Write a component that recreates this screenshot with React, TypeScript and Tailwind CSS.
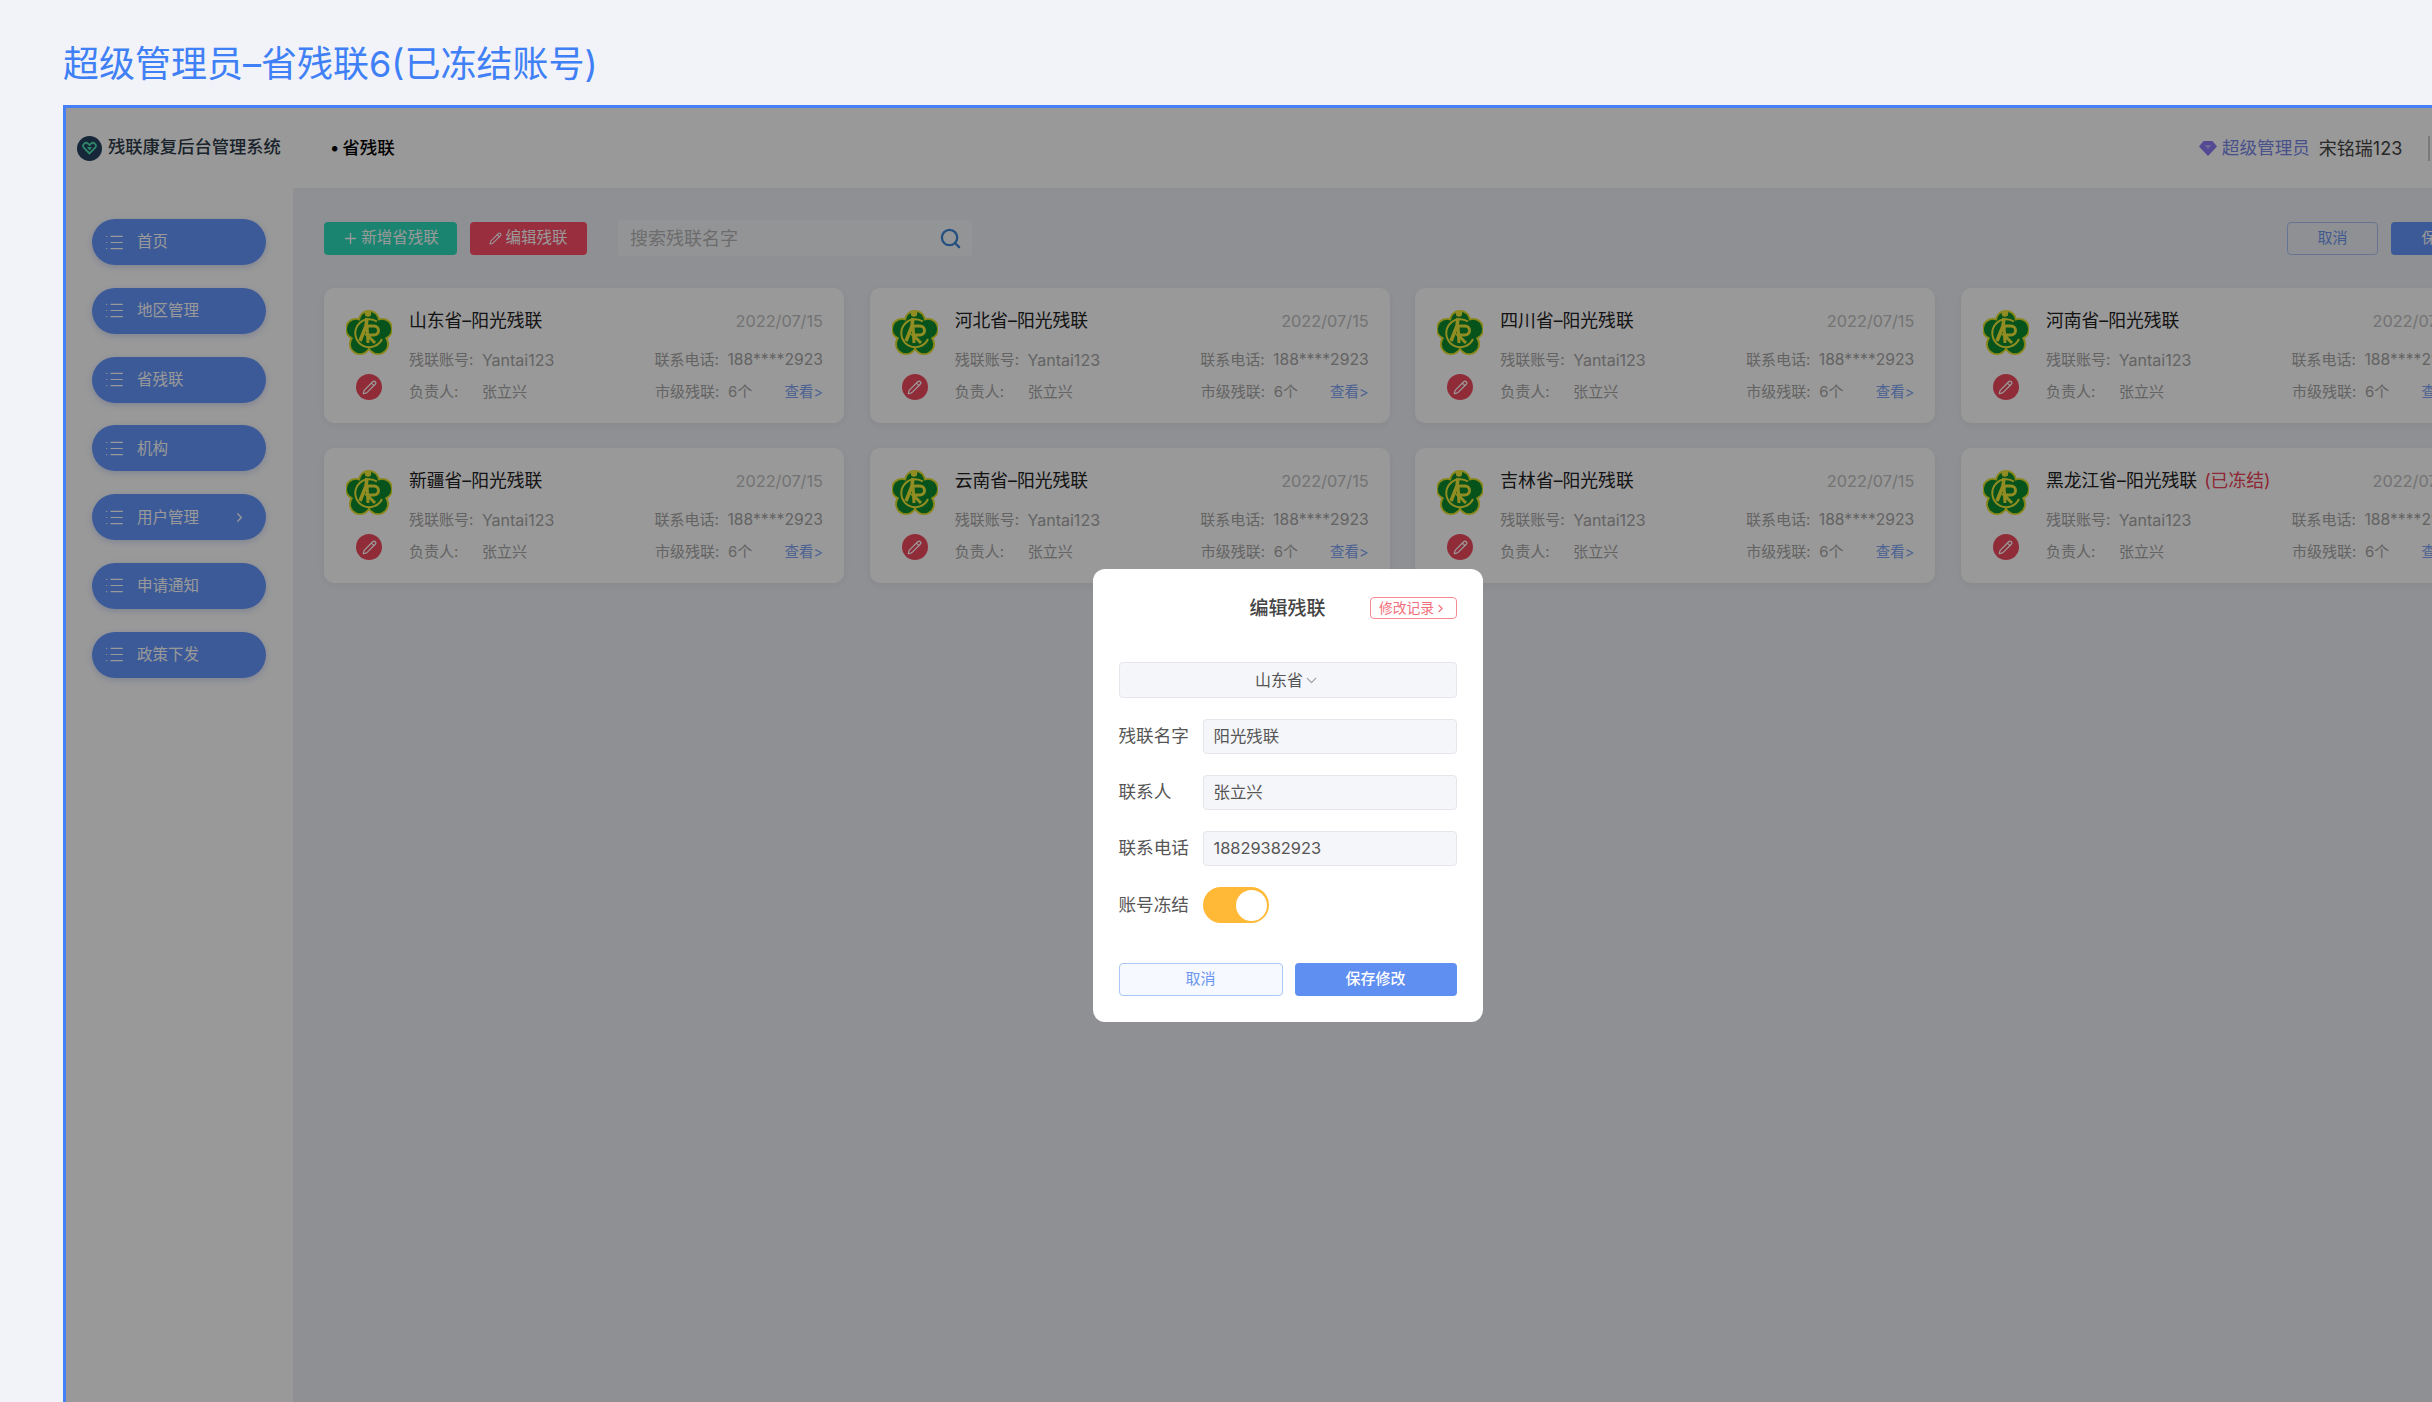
import React from "react";
import { ChevronDown, ChevronRight, List, Pencil, Plus, Search } from "lucide-react";

const navItems = ["首页", "地区管理", "省残联", "机构", "用户管理", "申请通知", "政策下发"];

const cards = [
  { name: "山东省–阳光残联" },
  { name: "河北省–阳光残联" },
  { name: "四川省–阳光残联" },
  { name: "河南省–阳光残联" },
  { name: "新疆省–阳光残联" },
  { name: "云南省–阳光残联" },
  { name: "吉林省–阳光残联" },
  { name: "黑龙江省–阳光残联", frozen: true },
];

function Emblem() {
  const petals = [
    [23, 13],
    [36, 21],
    [32, 36],
    [14, 36],
    [10, 21],
  ];
  return (
    <svg width="46" height="48" viewBox="0 0 46 48" fill="none">
      {petals.map(([x, y]) => (
        <circle key={`o${x}${y}`} cx={x} cy={y} r="11" fill="#e6e22c" />
      ))}
      <circle cx="23" cy="25" r="15" fill="#e6e22c" />
      {petals.map(([x, y]) => (
        <circle key={`i${x}${y}`} cx={x} cy={y} r="9.2" fill="#0a8a2e" />
      ))}
      <circle cx="23" cy="25" r="14" fill="#0a8a2e" />
      <circle cx="22" cy="5.5" r="3.2" fill="#f2ec3a" />
      <path d="M31 13.5A14 14 0 1 0 36 31" stroke="#f2ec3a" strokeWidth="2" />
      <path d="M21 10L20 18L14 33" stroke="#f2ec3a" strokeWidth="3.6" />
      <path d="M21 18H28A4.5 4.5 0 0 1 28 27H21L29 35" stroke="#f2ec3a" strokeWidth="3" />
      <path d="M21 17L22 35" stroke="#f2ec3a" strokeWidth="3" />
    </svg>
  );
}

function HeartLogo() {
  return (
    <span className="flex h-[25px] w-[25px] items-center justify-center rounded-full bg-[#24425f]">
      <svg width="15" height="14" viewBox="0 0 15 14" fill="none">
        <path
          d="M7.5 12.5L1.6 6.4C-.2 3.6 3.6.4 6 2.6L7.5 4 9 2.6C11.4.4 15.2 3.6 13.4 6.4Z"
          stroke="#4fe0b0"
          strokeWidth="1.8"
        />
        <path d="M5 6H10L7.5 9.5Z" fill="#4fe0b0" />
      </svg>
    </span>
  );
}

function Card({ name, frozen }: { name: string; frozen?: boolean }) {
  return (
    <div className="flex h-[135px] rounded-[10px] bg-white pl-[22px] pr-[21px] pt-[20px] shadow-[0_2px_8px_rgba(120,130,160,0.12)]">
      <div className="flex w-[63px] shrink-0 flex-col items-start">
        <Emblem />
        <span className="ml-[10px] mt-[18px] flex h-[26px] w-[26px] items-center justify-center rounded-full bg-[#f04a5e]">
          <Pencil size={15} className="text-white" strokeWidth={2} />
        </span>
      </div>
      <div className="min-w-0 flex-1 text-[15px] leading-[22px] text-[#a6a6a6]">
        <div className="flex h-[26px] items-center justify-between">
          <span className="text-[17.8px] text-[#222]">
            {name}
            {frozen && <span className="ml-[7px] text-[#ef4056]">(已冻结)</span>}
          </span>
          <span className="text-[16.3px] text-[#c0c0c0]">2022/07/15</span>
        </div>
        <div className="mt-[15px] flex items-center">
          <span className="w-[73px]">残联账号:</span>
          <span className="w-[173px] text-[16px]">Yantai123</span>
          <span className="w-[73px]">联系电话:</span>
          <span className="ml-auto text-[15.7px]">188****2923</span>
        </div>
        <div className="mt-[10px] flex items-center">
          <span className="w-[73px]">负责人:</span>
          <span className="w-[173px]">张立兴</span>
          <span className="w-[73px]">市级残联:</span>
          <span>6个</span>
          <span className="ml-auto text-[14.5px] text-[#7ea3f5]">查看&gt;</span>
        </div>
      </div>
    </div>
  );
}

function FormRow({ label, value }: { label: string; value: string }) {
  return (
    <div className="flex items-center">
      <span className="w-[84px] shrink-0 text-[17.6px] text-[#555]">{label}</span>
      <div className="flex h-[35px] flex-1 items-center rounded-[4px] border border-[#e4e6ec] bg-[#f5f6fa] pl-[10px] text-[16.4px] text-[#555]">
        {value}
      </div>
    </div>
  );
}

function EditDialog() {
  return (
    <div className="flex h-[453px] w-[390px] flex-col rounded-[12px] bg-white px-[26px]">
      <div className="relative mt-[28px] flex h-[22px] items-center justify-center">
        <span className="mt-[2px] text-[19px] font-medium text-[#444]">编辑残联</span>
        <span className="absolute right-0 top-0 flex h-[22px] w-[87px] items-center justify-center rounded-[4px] border border-[#f58a92] text-[13.8px] text-[#f2707b]">
          修改记录
          <ChevronRight size={13} />
        </span>
      </div>
      <div className="mt-[43px] flex h-[36px] items-center justify-center rounded-[4px] border border-[#e4e6ec] bg-[#f5f6fa] text-[16px] text-[#555]">
        山东省
        <ChevronDown size={17} strokeWidth={1.5} className="text-[#999]" />
      </div>
      <div className="mt-[21px] flex flex-col gap-[21px]">
        <FormRow label="残联名字" value="阳光残联" />
        <FormRow label="联系人" value="张立兴" />
        <FormRow label="联系电话" value="18829382923" />
        <div className="flex items-center">
          <span className="w-[84px] shrink-0 text-[17.6px] text-[#555]">账号冻结</span>
          <span className="flex h-[36px] w-[66px] items-center justify-end rounded-full bg-[#ffb936] pr-[2px]">
            <span className="h-[31px] w-[31px] rounded-full bg-white" />
          </span>
        </div>
      </div>
      <div className="mt-[40px] flex gap-[12px]">
        <button className="h-[33px] flex-1 rounded-[4px] border border-[#a9c8f5] bg-[#f6f9ff] text-[15px] text-[#6b96ee]">
          取消
        </button>
        <button className="h-[33px] flex-1 rounded-[4px] bg-[#5f8ff0] text-[15px] font-medium text-white">
          保存修改
        </button>
      </div>
    </div>
  );
}

export default function App() {
  return (
    <div
      className="h-screen overflow-hidden bg-[#f1f3f8]"
      style={{ fontFamily: 'Inter, "Noto Sans CJK SC", sans-serif' }}
    >
      <div className="flex h-[105px] items-center pl-[63px] pt-[22px] text-[36px] text-[#3f80f6]">
        超级管理员–省残联6(已冻结账号)
      </div>
      <div className="relative ml-[63px] w-[2450px] border-l-[3px] border-t-[3px] border-[#4680f7]">
        <div className="flex h-[1375px] flex-col">
          <header className="flex h-[80px] shrink-0 items-center bg-white">
            <div className="flex w-[264px] items-center gap-[6px] pl-[11px]">
              <HeartLogo />
              <span className="mb-[2px] text-[17.3px] font-medium text-[#2c3a48]">残联康复后台管理系统</span>
            </div>
            <span className="text-[17.5px] font-medium text-black">
              <span className="mr-[3px]">•</span>省残联
            </span>
            <div className="ml-[1804px] flex items-center text-[17.6px]">
              <svg width="18" height="15" viewBox="0 0 18 15" className="mr-[5px]">
                <path d="M4.5 0H13.5L18 5.5L9 15L0 5.5Z" fill="#8a7cf5" />
                <path d="M5.5 4H12.5L9 8Z" fill="#b5abff" />
              </svg>
              <span className="text-[#7a88e8]">超级管理员</span>
              <span className="ml-[9px] text-[18px] text-[#444]">宋铭瑞123</span>
              <span className="ml-[26px] h-[25px] w-[2px] bg-[#ccc]" />
            </div>
          </header>
          <div className="flex flex-1">
            <aside className="flex w-[227px] shrink-0 flex-col gap-[22.8px] bg-white pl-[26px] pt-[31px]">
              {navItems.map((item) => (
                <div
                  key={item}
                  className="flex h-[46px] w-[174px] items-center rounded-full bg-[#6596fe] pl-[12px] pr-[19px] text-[15.5px] text-white shadow-[0_2px_6px_rgba(70,110,220,0.25)]"
                >
                  <List size={21} strokeWidth={1.4} className="shrink-0" />
                  <span className="ml-[12px]">{item}</span>
                  {item === "用户管理" && <ChevronRight size={15} className="ml-auto" />}
                </div>
              ))}
            </aside>
            <main className="flex-1 bg-[#eff1f6] pl-[31px] pr-[31px] pt-[32px]">
              <div className="flex h-[36px] items-center">
                <button className="flex h-[33px] w-[133px] items-center justify-center gap-[2px] rounded-[4px] bg-[#2ddcbc] text-[15.5px] text-white">
                  <Plus size={17} />
                  新增省残联
                </button>
                <button className="ml-[13px] flex h-[33px] w-[117px] items-center justify-center gap-[3px] rounded-[4px] bg-[#ff4d68] text-[15.5px] text-white">
                  <Pencil size={13} />
                  编辑残联
                </button>
                <div className="ml-[31px] flex h-[36px] w-[354px] items-center justify-between rounded-[4px] bg-[#f6f7fb] pl-[12px] pr-[10px] text-[18px] text-[#b5b5b5]">
                  搜索残联名字
                  <Search size={23} strokeWidth={2.4} className="text-[#3d86d8]" />
                </div>
                <button className="ml-auto h-[33px] w-[91px] rounded-[4px] border border-[#a9c4f5] text-[15px] text-[#6b96ee]">
                  取消
                </button>
                <button className="ml-[13px] h-[33px] w-[91px] rounded-[4px] bg-[#6596fe] text-[15px] text-white">
                  保存
                </button>
              </div>
              <div className="mt-[32px] grid grid-cols-[repeat(4,520px)] gap-x-[25.67px] gap-y-[25px]">
                {cards.map((c) => (
                  <Card key={c.name} name={c.name} frozen={c.frozen} />
                ))}
              </div>
            </main>
          </div>
        </div>
        <div className="absolute inset-0 flex items-center justify-center bg-black/40 pr-[4px]">
          <EditDialog />
        </div>
      </div>
    </div>
  );
}
